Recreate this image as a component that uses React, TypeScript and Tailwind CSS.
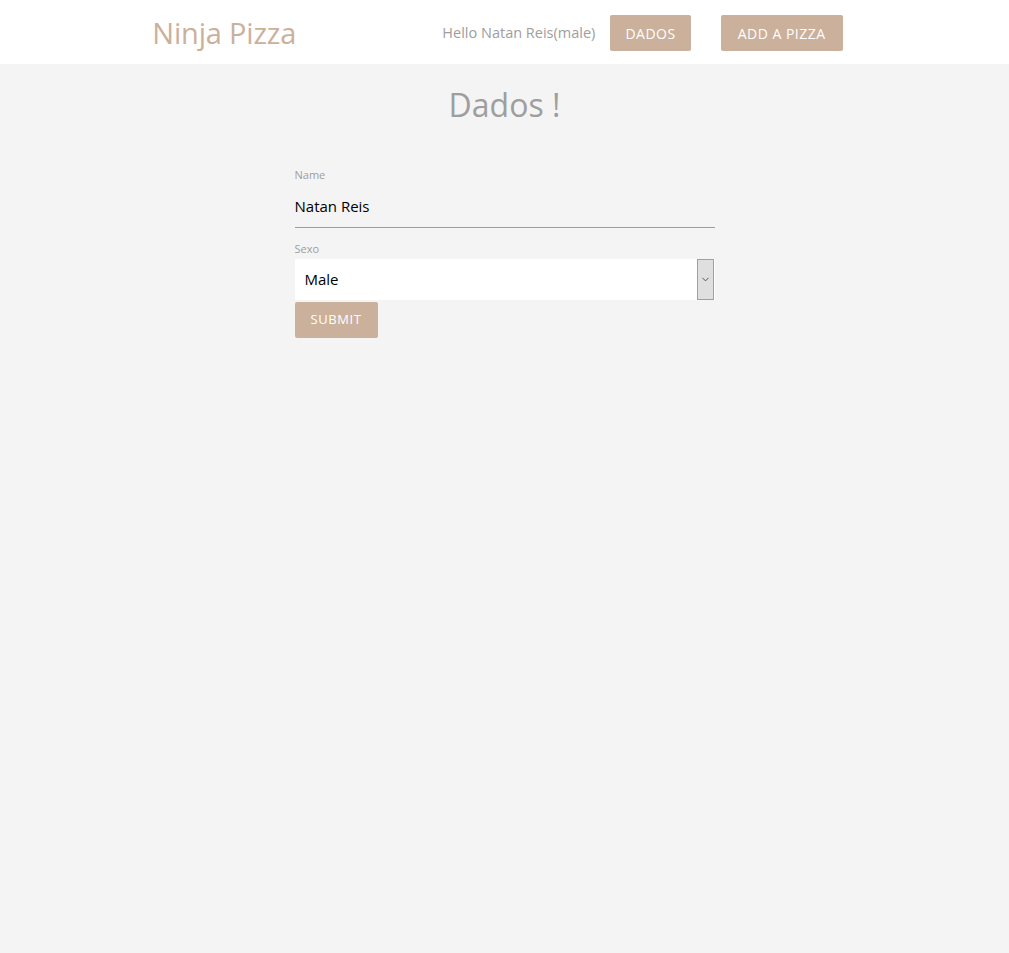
import { ChevronDown } from "lucide-react";

const font = { fontFamily: '"Open Sans", "Noto Sans", sans-serif' };

function NavButton({ label, wide }: { label: string; wide?: boolean }) {
  return (
    <a
      className={`flex h-9 items-center rounded-[2px] bg-[#cbb09c] text-[14px] tracking-[0.5px] text-white uppercase ${
        wide ? "px-[17px]" : "px-[15px]"
      }`}
    >
      {label}
    </a>
  );
}

export default function App() {
  return (
    <div className="min-h-[953px] bg-[#f4f4f4]" style={font}>
      {/* Nav */}
      <nav className="h-16 bg-white">
        <div className="mx-auto flex h-16 w-[70%] items-center justify-between pt-[2px]">
          <span className="ml-px text-[29px] tracking-[-0.2px] text-[#cbb09c]">Ninja Pizza</span>
          <ul className="flex items-center pr-[15px]">
            <li className="pr-[15px] text-[14.5px] text-[#9e9e9e]">Hello Natan Reis(male)</li>
            <li>
              <NavButton label="Dados" />
            </li>
            <li className="pl-[30px]">
              <NavButton label="Add a pizza" wide />
            </li>
          </ul>
        </div>
      </nav>

      {/* Body */}
      <section className="pt-[19px]">
        <h4 className="text-center text-[32px] leading-[44px] text-[#9e9e9e]">Dados !</h4>

        <form className="mx-auto mt-[40px] w-[460px] px-5">
          <label className="block text-[11px] leading-4 text-[#9e9e9e]">Name</label>
          <div className="mt-[13px] border-b border-[#9e9e9e] pb-[11px] text-[15px] leading-5 text-black">
            Natan Reis
          </div>

          <label className="mt-[13px] block text-[11px] leading-4 text-[#9e9e9e]">Sexo</label>
          <div className="mt-[2px] flex h-[41px] items-stretch bg-white pr-px">
            <span className="flex flex-1 items-center pl-[10px] text-[15px] text-black">Male</span>
            <span className="flex w-[17px] items-center justify-center border border-[#a0a0a0] bg-[#dfdfdf]">
              <ChevronDown size={11} strokeWidth={1.75} className="text-[#333]" />
            </span>
          </div>

          <button
            type="button"
            className="mt-[2px] flex h-9 items-center rounded-[2px] bg-[#cbb09c] px-[16px] text-[13px] tracking-[0.6px] text-white uppercase"
          >
            Submit
          </button>
        </form>
      </section>
    </div>
  );
}
